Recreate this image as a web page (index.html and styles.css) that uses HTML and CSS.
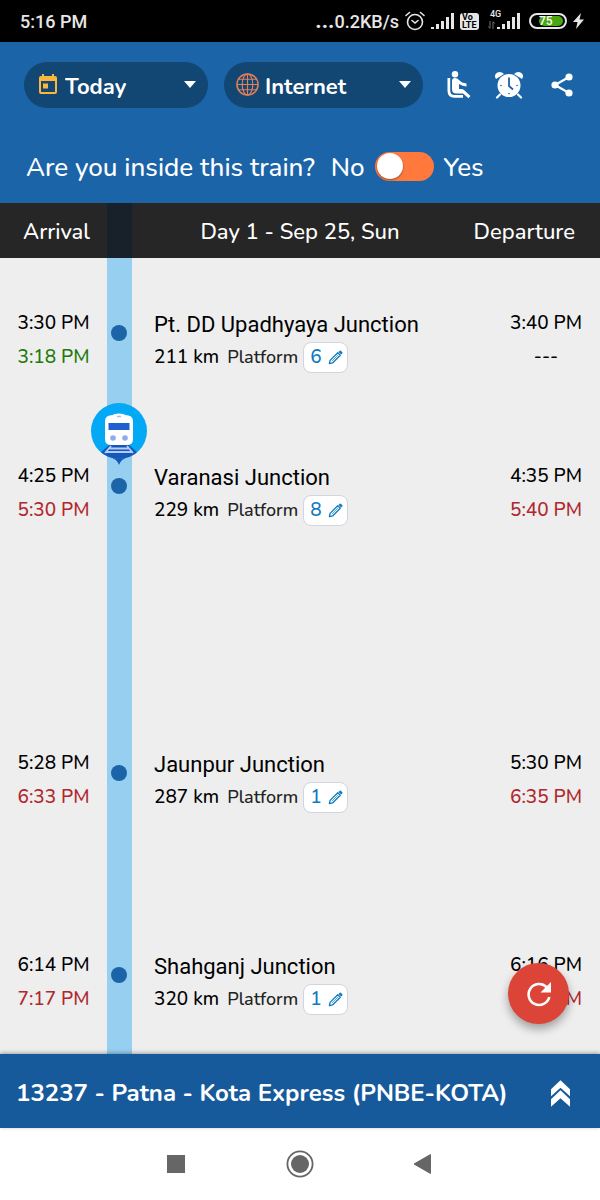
FILE: index.html
```html
<!DOCTYPE html>
<html lang="en">
<head>
<meta charset="utf-8">
<meta name="viewport" content="width=device-width, initial-scale=1">
<title>13237 - Patna - Kota Express</title>
<link rel="stylesheet" href="styles.css">
</head>
<body>
<svg width="0" height="0" class="sprite" aria-hidden="true">
  <symbol id="pencil" viewBox="0 0 16 16">
    <path d="M1.500 14.500l.7-3.400 8.200-8.200 2.700 2.700-8.200 8.200z" fill="none" stroke="currentColor" stroke-width="1.400" stroke-linejoin="round"/>
    <path d="M4 12l6.600-6.600" stroke="currentColor" stroke-width=".7"/>
    <path d="M11.200 2l1.300-1.300q.6-.5 1.200 0l1.600 1.600q.5.6 0 1.200L14 4.800z" fill="currentColor"/>
  </symbol>
  <symbol id="signal" viewBox="0 0 23 16">
    <path d="M0 14h3v2H0zM5 11h3v5H5zM10 8h3v8h-3zM15 4h3v12h-3zM20 0h3v16h-3z" fill="currentColor"/>
  </symbol>
</svg>

<div class="status">
  <span class="status-time">5:16 PM</span>
  <div class="status-right">
    <span><b class="dots">...</b>0.2KB/s</span>
    <svg class="status-alarm" viewBox="0 0 20 20" fill="none" stroke="currentColor" stroke-width="1.600" stroke-linecap="round">
      <circle cx="10" cy="11" r="7.500"/><path d="M7 9.500l3 2.500 3-2.500M1 4.500l3.500-3M19 4.500l-3.500-3"/>
    </svg>
    <svg class="bars"><use href="#signal"/></svg>
    <span class="volte"><span>Vo</span><span>LTE</span></span>
    <span class="network"><span class="network-type">4G</span>
      <svg class="arrows" viewBox="0 0 7 8" fill="none" stroke="currentColor"><path d="M2 0v7M.500 5.500L2 7.500M5 8V1M5 .500l1.500 2"/></svg>
      <svg class="bars"><use href="#signal"/></svg></span>
    <span class="battery"><span class="battery-level">75</span></span>
    <svg class="bolt" viewBox="0 0 11 16"><path d="M8 0L0 9h4.500L3 16l8-9.500H6.500z" fill="currentColor"/></svg>
  </div>
</div>

<header class="header">
  <div class="toolbar">
    <div class="pill pill-day">
      <svg class="pill-icon calendar" viewBox="0 0 18 20"><path d="M3 0h2v2h8V0h2v2h1q2 0 2 2v14q0 2-2 2H2q-2 0-2-2V4q0-2 2-2h1zM2 7v11h14V7z" fill="#fbb63c" fill-rule="evenodd"/><path d="M4 9.500h5v5H4z" fill="#fbb63c"/></svg>
      <select aria-label="Day"><option>Today</option><option>Yesterday</option></select>
      <svg class="caret" viewBox="0 0 12 7"><path d="M0 0h12L6 7z" fill="#fff"/></svg>
    </div>
    <div class="pill pill-source">
      <svg class="pill-icon globe" viewBox="0 0 24 24" fill="none" stroke="#e0805a" stroke-width="1.200"><circle cx="12" cy="12" r="11" stroke-width="1.600"/><ellipse cx="12" cy="12" rx="5.500" ry="11"/><path d="M12 1v22M1 12h22M3 6.500h18M3 17.500h18"/></svg>
      <select aria-label="Source"><option>Internet</option><option>Cell tower</option></select>
      <svg class="caret" viewBox="0 0 12 7"><path d="M0 0h12L6 7z" fill="#fff"/></svg>
    </div>
    <button class="icon-button" aria-label="Seat">
      <svg viewBox="0 0 28 28"><g fill="#fff"><circle cx="10" cy="3.200" r="3.200"/><path d="M7 10q0-3 3-3 2.500 0 4 2 2.500 3 7.500 3.500v3q-4-.500-7.500-2.500V18h2.500q1.500 0 2.500 1l6.500 6-2 2.200-5.500-4.700H11.500Q7 22.500 7 18z"/><path d="M2.500 7H5.200v12.500q0 4.500 4.500 4.500H18v2.700H9.500q-7 0-7-7z"/></g></svg>
    </button>
    <button class="icon-button" aria-label="Alarm">
      <svg viewBox="0 0 28 28"><circle cx="14" cy="14.500" r="11.500" fill="#fff"/><path d="M5 23.500l-3 3M23 23.500l3 3" stroke="#fff" stroke-width="2.200" stroke-linecap="round"/><path d="M1 8Q-1.500 4 2 1.800T9 3zM27 8Q29.500 4 26 1.800T19 3z" fill="#fff"/><path d="M14 6.500V15l4 3.500" fill="none" stroke="#1b64a8" stroke-width="1.800"/><g fill="#1b64a8"><circle cx="6" cy="14.500" r=".8"/><circle cx="22" cy="14.500" r=".8"/><circle cx="14" cy="22.500" r=".8"/></g></svg>
    </button>
    <button class="icon-button share" aria-label="Share">
      <svg viewBox="0 0 28 28"><path d="M21 6L7 14l14 8" fill="none" stroke="#fff" stroke-width="2.200"/><g fill="#fff"><circle cx="21" cy="6" r="3.600"/><circle cx="7" cy="14" r="3.600"/><circle cx="21" cy="22" r="3.600"/></g></svg>
    </button>
  </div>
  <div class="question">
    <label for="inside">Are you inside this train?</label>
    <div class="choice"><span>No</span><input id="inside" class="switch" type="checkbox" role="switch"><span>Yes</span></div>
  </div>
</header>

<main class="main">
  <table class="timeline">
    <thead>
      <tr><th class="arr">Arrival</th><th class="rail"></th><th class="day">Day 1 - Sep 25, Sun</th><th class="dep">Departure</th></tr>
    </thead>
    <tbody>
      <tr class="leg-short">
        <td class="arr"><div>3:30 PM</div><div class="early">3:18 PM</div></td>
        <td class="rail"><span class="dot"></span></td>
        <td class="station"><div class="name">Pt. DD Upadhyaya Junction</div><div class="info"><span class="km">211 km</span><span class="platform">Platform</span><button class="edit">6 <svg><use href="#pencil"/></svg></button></div></td>
        <td class="dep"><div>3:40 PM</div><div>---</div></td>
      </tr>
      <tr class="leg-long">
        <td class="arr"><div>4:25 PM</div><div class="late">5:30 PM</div></td>
        <td class="rail">
          <svg class="train" viewBox="0 0 56 62">
            <clipPath id="disc"><circle cx="28" cy="28" r="28"/></clipPath>
            <path d="M14 50l9 6q3 1 5 6 2-5 5-6l9-6z" fill="#1658b8"/>
            <circle cx="28" cy="28" r="28" fill="#03a9f4"/>
            <g clip-path="url(#disc)"><path d="M18 42h20l10 9v7H8v-7z" fill="#1658b8"/></g>
            <path d="M20 43l-6 7M36 43l6 7M18 45.500h20M15 49h26" stroke="#b4ccff" stroke-width="1.800" fill="none"/>
            <path d="M14 18q0-6 8-6 1-1.500 6-1.500t6 1.500q8 0 8 6v18q0 6-6 6H20q-6 0-6-6z" fill="#fff"/>
            <path d="M26 13.500h4" stroke="#a9b9e8" stroke-width="1.500"/>
            <path d="M17.500 20h21v7h-21z" fill="#1f5fd0"/>
            <circle cx="22" cy="35" r="2.800" fill="#8fabed"/><circle cx="34" cy="35" r="2.800" fill="#8fabed"/>
          </svg>
          <span class="dot"></span>
        </td>
        <td class="station"><div class="name">Varanasi Junction</div><div class="info"><span class="km">229 km</span><span class="platform">Platform</span><button class="edit">8 <svg><use href="#pencil"/></svg></button></div></td>
        <td class="dep"><div>4:35 PM</div><div class="late">5:40 PM</div></td>
      </tr>
      <tr class="leg-medium">
        <td class="arr"><div>5:28 PM</div><div class="late">6:33 PM</div></td>
        <td class="rail"><span class="dot"></span></td>
        <td class="station"><div class="name">Jaunpur Junction</div><div class="info"><span class="km">287 km</span><span class="platform">Platform</span><button class="edit">1 <svg><use href="#pencil"/></svg></button></div></td>
        <td class="dep"><div>5:30 PM</div><div class="late">6:35 PM</div></td>
      </tr>
      <tr>
        <td class="arr"><div>6:14 PM</div><div class="late">7:17 PM</div></td>
        <td class="rail"><span class="dot"></span></td>
        <td class="station"><div class="name">Shahganj Junction</div><div class="info"><span class="km">320 km</span><span class="platform">Platform</span><button class="edit">1 <svg><use href="#pencil"/></svg></button></div></td>
        <td class="dep"><div>6:16 PM</div><div class="late">7:19 PM</div></td>
      </tr>
    </tbody>
  </table>
  <button class="refresh" aria-label="Refresh">
    <svg viewBox="0 0 26 26"><path d="M20.500 6A10.500 10.500 0 1 0 23.300 16" fill="none" stroke="#fff" stroke-width="2.600"/><path d="M25 1v10.500H14.500z" fill="#fff"/></svg>
  </button>
</main>

<footer class="footer">
  <h1>13237 - Patna - Kota Express (PNBE-KOTA)</h1>
  <button class="expand" aria-label="Expand"><svg viewBox="0 0 20 28"><path d="M10 0l10 9.500V17L10 8 0 17V9.500zM10 10.500L20 20v8l-10-9-10 9v-8z" fill="#fff"/></svg></button>
</footer>

<nav class="system">
  <button aria-label="Recent apps"><svg viewBox="0 0 28 28"><path d="M5 5h18v18H5z" fill="#666"/></svg></button>
  <button aria-label="Home"><svg viewBox="0 0 28 28"><circle cx="14" cy="14" r="12.600" fill="none" stroke="#666" stroke-width="1.800"/><circle cx="14" cy="14" r="9" fill="#666"/></svg></button>
  <button aria-label="Back"><svg viewBox="0 0 28 28"><path d="M20.500 4.500v19L4 14z" fill="#666" stroke="#666" stroke-linejoin="round"/></svg></button>
</nav>
</body>
</html>
```

FILE: styles.css
```css
* { box-sizing: border-box; }

body {
  margin: 0;
  min-height: 100vh;
  display: flex;
  flex-direction: column;
  background: #eee;
  color: #000;
  font-family: Nunito, Lato, sans-serif;
  font-weight: 500;
}

button { border: 0; padding: 0; background: none; font: inherit; cursor: pointer; }
svg { display: block; }
.sprite { position: absolute; }

/* Status bar */
.status {
  display: flex;
  align-items: center;
  justify-content: space-between;
  height: 42px;
  padding: 0 16px 0 20px;
  background: #000;
  color: #e6e6e6;
  font: 500 18px Roboto, sans-serif;
}
.status-right { display: flex; align-items: center; gap: 6px; }
.dots { font-size: 22px; line-height: 20px; }
.status-alarm { width: 20px; height: 20px; }
.bars { width: 23px; height: 16px; }
.volte {
  display: flex;
  flex-direction: column;
  width: 19px;
  height: 17px;
  padding-left: 2px;
  border-radius: 3px;
  background: #e6e6e6;
  color: #000;
  font-size: 9px;
  font-weight: 700;
  line-height: 8px;
}
.network { position: relative; display: flex; align-items: flex-end; gap: 2px; margin-left: 3px; }
.network-type { position: absolute; left: 2px; top: -4px; font-size: 9px; line-height: 10px; }
.arrows { width: 7px; height: 8px; opacity: .5; }
.battery {
  width: 38px;
  height: 16px;
  margin-left: 3px;
  padding: 1px;
  border: 2px solid #e6e6e6;
  border-radius: 8px;
}
.battery-level {
  display: block;
  width: 75%;
  margin-left: auto;
  margin-right: 1px;
  height: 10px;
  border-radius: 5px;
  background: #48a60e;
  color: #fff;
  font-size: 12px;
  line-height: 10px;
  text-align: left;
}
.bolt { width: 11px; height: 16px; }

/* Header */
.header { padding: 20px 24px 17px; background: #1b64a8; color: #fff; }
.toolbar { display: flex; align-items: center; gap: 22px; }
.pill {
  position: relative;
  display: flex;
  align-items: center;
  height: 46px;
  border-radius: 23px;
  background: #124673;
}
.pill-day { flex: 184 1 0; margin-right: -6px; }
.pill-source { flex: 199 1 0; }
.pill select {
  width: 100%;
  height: 100%;
  padding: 3px 32px 0 41px;
  border: 0;
  border-radius: 23px;
  appearance: none;
  background: transparent;
  color: #fff;
  font: 700 22px Nunito, Lato, sans-serif;
}
.pill-icon, .caret { position: absolute; pointer-events: none; }
.calendar { left: 15px; top: 12px; width: 18px; height: 20px; }
.globe { left: 12px; top: 11px; width: 23px; height: 23px; }
.caret { right: 12px; top: 19px; width: 12px; height: 7px; }
.icon-button svg { width: 28px; height: 28px; }
.share { margin-left: 3px; }
.question {
  display: flex;
  flex-wrap: wrap;
  align-items: center;
  gap: 16px;
  margin-top: 42px;
  padding-left: 2px;
  font-size: 26px;
  line-height: 36px;
}
.choice { display: flex; align-items: center; gap: 10px; }
.switch {
  width: 59px;
  height: 29px;
  margin: 0 0 4px;
  padding: 1px 2px;
  border-radius: 15px;
  appearance: none;
  background: #ff783c;
}
.switch::before {
  content: "";
  display: block;
  width: 26px;
  height: 26px;
  border-radius: 50%;
  background: #fff;
  box-shadow: 0 1px 2px #0006;
}
.switch:checked::before { margin-left: auto; }

/* Timeline */
.main { position: relative; flex: 1; display: flex; overflow: hidden; }
.timeline { flex: 1; border-collapse: collapse; table-layout: fixed; font-size: 19px; }
.timeline th {
  height: 55px;
  padding: 2px 0 0 6px;
  background: #262626;
  color: #fff;
  font-size: 22px;
  font-weight: 500;
}
.timeline th.rail { width: 25px; padding: 0; background: #18212a; }
.timeline th.arr { width: 107px; }
.timeline th.dep { width: 136px; padding: 2px 25px 0 0; text-align: right; }
.timeline th.day { padding: 2px 0 0 4px; }
.timeline td { padding: 48px 0 0; vertical-align: top; line-height: 34px; }
td.arr { text-align: center; }
.timeline td.dep { padding-left: 28px; text-align: center; }
.timeline td.rail { position: relative; background: #97cff0; }
.timeline td.station { padding: 51px 0 0 22px; }
.leg-short { height: 153px; }
.leg-long { height: 287px; }
.leg-medium { height: 202px; }
.early { color: #1f7a0b; }
.late { color: #b0282d; }
.dot {
  position: absolute;
  left: 4px;
  top: 67px;
  width: 16px;
  height: 16px;
  border-radius: 50%;
  background: #1b64a8;
}
.train { position: absolute; left: -16px; top: -8px; z-index: 1; width: 56px; height: 62px; }
.name { font: 22px/32px Roboto, sans-serif; }
.info { display: flex; align-items: center; font-size: 18px; line-height: 31px; }
.km { font-size: 19px; }
.platform { margin: 0 5px 0 8px; padding-top: 1px; color: #222; }
.edit {
  display: flex;
  align-items: center;
  gap: 6px;
  height: 31px;
  padding: 1px 4px 0 6px;
  border: 1px solid #d4d4de;
  border-radius: 8px;
  background: #fff;
  color: #0e7abf;
  font-size: 19px;
}
.edit svg { width: 15px; height: 15px; }
.refresh {
  position: absolute;
  right: 31px;
  bottom: 30px;
  display: grid;
  place-items: center;
  width: 61px;
  height: 61px;
  border-radius: 50%;
  background: #db4437;
  box-shadow: 0 5px 10px #0005;
}
.refresh svg { width: 26px; height: 26px; }

/* Train title bar */
.footer {
  position: relative;
  display: flex;
  align-items: center;
  justify-content: space-between;
  min-height: 74px;
  padding: 4px 30px 0 16px;
  background: #175a9b;
  color: #fff;
  box-shadow: 0 -1px 4px #0005;
}
.footer h1 { margin: 0; font-size: 24px; font-weight: 700; }
.expand svg { width: 19px; height: 27px; }

/* System navigation */
.system {
  display: flex;
  align-items: center;
  justify-content: center;
  gap: 96px;
  height: 72px;
  background: #fff;
}
.system svg { width: 28px; height: 28px; }
```
